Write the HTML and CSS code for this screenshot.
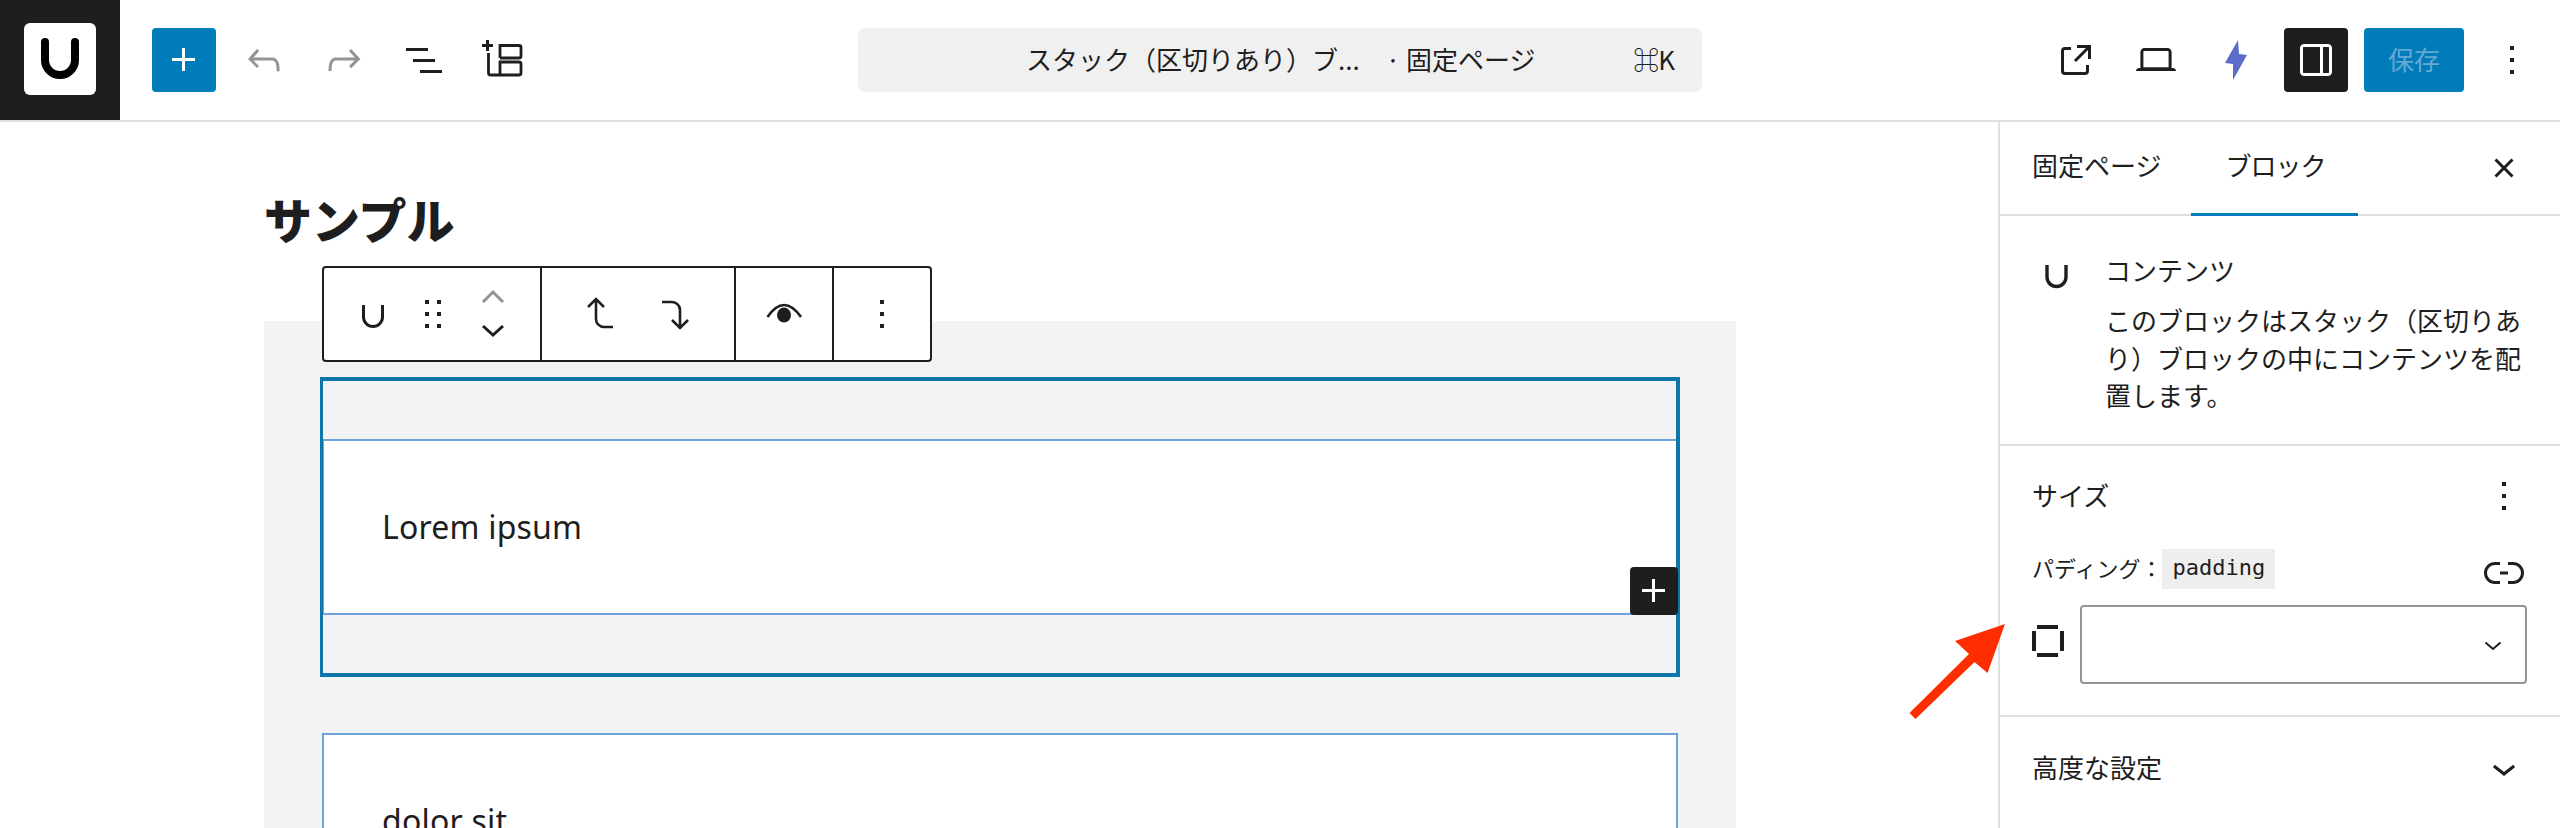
FILE: index.html
```html
<!DOCTYPE html>
<html lang="ja">
<head>
<meta charset="utf-8">
<title>サンプル</title>
<link rel="stylesheet" href="styles.css">
</head>
<body>
<div class="app">
  <header class="topbar">
    <div class="logo-cell">
      <div class="logo-box">
        <svg width="72" height="72" viewBox="0 0 72 72"><path d="M21 19V37a15 15 0 0 0 30 0V19" fill="none" stroke="#000" stroke-width="8" stroke-linecap="round"/></svg>
      </div>
    </div>
    <div class="tools-left">
      <button class="btn btn-primary"><svg class="ico" viewBox="0 0 24 24"><path d="M11 12.5V17.5H12.5V12.5H17.5V11H12.5V6H11V11H6V12.5H11Z" fill="#fff"/></svg></button>
      <button class="btn"><svg class="ico" viewBox="0 0 24 24"><path class="muted" d="M18.3 11.7c-.6-.6-1.4-.9-2.3-.9H6.7l2.9-3.3-1.1-1-4.5 5L8.5 16l1-1-2.7-2.7H16c.5 0 .9.2 1.3.5 1 1 1 3.4 1 4.5v.3h1.5v-.2c0-1.5 0-4.3-1.5-5.7z"/></svg></button>
      <button class="btn"><svg class="ico" viewBox="0 0 24 24"><path class="muted" d="M15.6 6.5l-1.1 1 2.9 3.3H8c-.9 0-1.7.3-2.3.9-1.4 1.5-1.4 4.2-1.4 5.6v.2h1.5v-.3c0-1.1 0-3.5 1-4.5.3-.3.7-.5 1.3-.5h9.2L14.5 15l1.1 1.1 4.6-4.6-4.6-5z"/></svg></button>
      <button class="btn"><svg class="ico" viewBox="0 0 24 24"><path d="M3 6h11v1.5H3V6Zm3.5 5.5h11V13h-11v-1.5ZM21 17H10v1.5h11V17Z" fill="#1e1e1e"/></svg></button>
      <button class="btn"><svg class="ico" viewBox="0 0 48 48"><g fill="none" stroke="#1e1e1e" stroke-width="3"><path d="M7.500 4v11M2 9.500h11"/><path d="M8.500 17V37a2 2 0 0 0 2 2H39a2 2 0 0 0 2-2V28a2 2 0 0 0-2-2H20V39M20 22V9.500H39a2 2 0 0 1 2 2V20a2 2 0 0 1-2 2H20" stroke-width="2.800"/></g></svg></button>
    </div>
    <div class="command">
      <span class="command-title">スタック（区切りあり）ブ...</span>
      <span class="command-type">· 固定ページ</span>
      <span class="command-key">⌘K</span>
    </div>
    <div class="tools-right">
      <button class="btn"><svg class="ico" viewBox="0 0 24 24"><path d="M19.5 4.500h-7V6h4.440l-5.970 5.970 1.060 1.060L18 7.060v4.440h1.500v-7Zm-13 1a2 2 0 0 0-2 2v10a2 2 0 0 0 2 2h10a2 2 0 0 0 2-2v-3H17v3a.5.5 0 0 1-.5.5h-10a.5.5 0 0 1-.5-.5v-10a.5.5 0 0 1 .5-.5h3V5.500h-3Z" fill="#1e1e1e"/></svg></button>
      <button class="btn"><svg class="ico" viewBox="0 0 24 24"><path d="M20.500 16h-.7V8c0-1.100-.9-2-2-2H6.200c-1.100 0-2 .9-2 2v8h-.7c-.8 0-1.500.7-1.500 1.500h20c0-.8-.7-1.500-1.500-1.500zM5.700 8c0-.3.2-.5.5-.5h11.600c.3 0 .5.2.5.5v7.600H5.700V8z" fill="#1e1e1e"/></svg></button>
      <button class="btn"><svg class="ico" viewBox="0 0 48 48"><path d="M26 4 13 27l8 1v16L35 19l-8-1z" fill="#5b6cc9"/></svg></button>
      <button class="btn btn-dark"><svg class="ico" viewBox="0 0 24 24"><path d="M18 4H6c-1.100 0-2 .9-2 2v12c0 1.100.9 2 2 2h12c1.100 0 2-.9 2-2V6c0-1.100-.9-2-2-2zm-4 14.500H6c-.3 0-.5-.2-.5-.5V6c0-.3.2-.5.5-.5h8v13zm4.500-.5c0 .3-.2.5-.5.5h-2.500v-13H18c.3 0 .5.2.5.5v12z" fill="#fff"/></svg></button>
      <button class="btn-save">保存</button>
      <button class="btn"><svg class="ico" viewBox="0 0 24 24"><path d="M13 19h-2v-2h2v2zm0-6h-2v-2h2v2zm0-6h-2V5h2v2z" fill="#1e1e1e"/></svg></button>
    </div>
  </header>

  <div class="workspace">
    <main class="canvas">
      <h1 class="page-title">サンプル</h1>
      <div class="block-toolbar">
        <div class="tb-group tb-first">
          <span class="tb-btn"><svg class="ico" viewBox="0 0 48 48"><path d="M14.500 15V27a9.500 9.500 0 0 0 19 0V15" fill="none" stroke="#1e1e1e" stroke-width="3"/></svg></span>
          <span class="tb-btn"><svg class="ico" viewBox="0 0 24 24"><path d="M8 7h2V5H8v2zm0 6h2v-2H8v2zm0 6h2v-2H8v2zm6-14v2h2V5h-2zm0 8h2v-2h-2v2zm0 6h2v-2h-2v2z" fill="#1e1e1e"/></svg></span>
          <span class="tb-btn"><svg class="ico-tall" viewBox="0 0 48 64"><path d="M14 20 24 10 34 20" fill="none" stroke="#949494" stroke-width="3"/><path d="M14 44 24 53 34 44" fill="none" stroke="#1e1e1e" stroke-width="3"/></svg></span>
        </div>
        <div class="tb-group tb-second">
          <span class="tb-arrow"><svg class="ico" viewBox="0 0 48 48"><path d="M20 9V29a8 8 0 0 0 8 8h9M12 17l8-8 8 8" fill="none" stroke="#1e1e1e" stroke-width="2.600"/></svg></span>
          <span class="tb-arrow"><svg class="ico" viewBox="0 0 48 48"><path d="M10 12h10a8 8 0 0 1 8 8V38M20 30l8 8 8-8" fill="none" stroke="#1e1e1e" stroke-width="2.600"/></svg></span>
        </div>
        <div class="tb-group tb-single">
          <svg class="ico" viewBox="0 0 48 48"><path d="M7.500 27Q24 3 41 27" fill="none" stroke="#1e1e1e" stroke-width="2.600"/><ellipse cx="24" cy="25" rx="7" ry="7.500" fill="#1e1e1e"/></svg>
        </div>
        <div class="tb-group tb-single tb-last">
          <svg class="ico" viewBox="0 0 24 24"><path d="M13 19h-2v-2h2v2zm0-6h-2v-2h2v2zm0-6h-2V5h2v2z" fill="#1e1e1e"/></svg>
        </div>
      </div>
      <section class="stack">
        <div class="stack-item is-selected">
          <div class="content-block">
            <p class="content-text">Lorem ipsum</p>
            <span class="inserter"><svg class="ico" viewBox="0 0 24 24"><path d="M11 12.500V17.500H12.500V12.500H17.500V11H12.500V6H11V11H6V12.500H11Z" fill="#fff"/></svg></span>
          </div>
        </div>
        <div class="stack-item">
          <div class="content-block">
            <p class="content-text">dolor sit</p>
          </div>
        </div>
      </section>
    </main>

    <aside class="sidebar">
      <div class="tabs">
        <span class="tab">固定ページ</span>
        <span class="tab tab-active">ブロック</span>
        <button class="btn-plain tabs-close"><svg class="ico" viewBox="0 0 24 24"><path d="M12 13.060l3.712 3.713 1.061-1.060L13.061 12l3.712-3.712-1.060-1.060L12 10.938 8.288 7.227l-1.061 1.060L10.939 12l-3.712 3.712 1.060 1.061L12 13.061z" fill="#1e1e1e"/></svg></button>
      </div>

      <div class="panel panel-card">
        <svg class="ico" viewBox="0 0 48 48"><path d="M15 15V27a9.500 9.500 0 0 0 19 0V15" fill="none" stroke="#1e1e1e" stroke-width="3.400"/></svg>
        <div class="card-body">
          <h2 class="card-title">コンテンツ</h2>
          <p class="card-desc">このブロックはスタック（区切りあり）ブロックの中にコンテンツを配置します。</p>
        </div>
      </div>

      <div class="panel panel-size">
        <div class="panel-head">
          <span class="panel-name">サイズ</span>
          <svg class="ico" viewBox="0 0 24 24"><path d="M13 19h-2v-2h2v2zm0-6h-2v-2h2v2zm0-6h-2V5h2v2z" fill="#1e1e1e"/></svg>
        </div>
        <div class="field-label-row">
          <span class="field-label"><span class="field-label-text">パディング：</span><code class="code-tag">padding</code></span>
          <svg class="ico" viewBox="0 0 48 48"><path d="M20 14.500h-5a9.500 9.500 0 0 0 0 19h5M28 14.500h5a9.500 9.500 0 0 1 0 19h-5M20 24h8" fill="none" stroke="#1e1e1e" stroke-width="3"/></svg>
        </div>
        <div class="field-row">
          <svg class="sides-ico" viewBox="0 0 32 32"><path d="M5 0h21v4H5zM5 28h21v4H5zM0 6h4v20H0zM28 6h4v20h-4z" fill="#1e1e1e"/></svg>
          <div class="select">
            <svg class="select-chevron" viewBox="0 0 18 10"><path d="M1.500 1.500 9 8l7.500-6.500" fill="none" stroke="#1e1e1e" stroke-width="2"/></svg>
          </div>
        </div>
      </div>

      <div class="panel panel-advanced">
        <span class="panel-name">高度な設定</span>
        <svg class="ico" viewBox="0 0 24 24"><path d="M17.500 11.600L12 16l-5.500-4.400.9-1.200L12 14l4.600-3.600 1 1.200z" fill="#1e1e1e"/></svg>
      </div>
    </aside>
  </div>

  <svg class="annotation" width="120" height="110" viewBox="0 0 120 110"><polygon points="105,9 87.500,58 74.500,47 15.500,104 9.500,98 69,39 55,26" fill="#ff2e00"/></svg>
</div>
</body>
</html>
```
FILE: styles.css
```css
* { box-sizing: border-box; }
html, body { margin: 0; padding: 0; background: #fff; }
body {
  font-family: "Noto Sans CJK JP", "Noto Sans", sans-serif;
  color: #1e1e1e;
  font-size: 26px;
}
button { font: inherit; color: inherit; border: 0; padding: 0; background: none; }
h1, h2, p { margin: 0; font-weight: 400; }

.app { position: relative; width: 2560px; height: 828px; overflow: hidden; }
.ico { display: block; width: 48px; height: 48px; flex: none; }
.muted { fill: #949494; }

/* top bar */
.topbar {
  display: grid;
  grid-template-columns: 1fr auto 1fr;
  align-items: center;
  height: 122px;
  border-bottom: 2px solid #e0e0e0;
  position: relative;
}
.logo-cell {
  position: absolute;
  left: 0; top: 0;
  width: 120px; height: 120px;
  background: #1e1e1e;
  padding: 23px 24px;
}
.logo-box { width: 72px; height: 72px; background: #fff; border-radius: 6px; }
.logo-box svg { display: block; }
.tools-left { display: flex; gap: 16px; padding-left: 152px; }
.tools-right { display: flex; gap: 16px; justify-content: flex-end; padding-right: 16px; }
.btn {
  width: 64px; height: 64px;
  border-radius: 4px;
  display: flex; align-items: center; justify-content: center;
}
.btn-primary { background: #007cba; }
.btn-dark { background: #1e1e1e; }
.btn-save {
  width: 100px; height: 64px;
  border-radius: 4px;
  background: #007cba;
  color: #66a9d6;
  font-size: 26px;
  padding-bottom: 4px;
}
.command {
  width: 844px; height: 64px;
  background: #f0f0f0;
  border-radius: 8px;
  display: flex; align-items: center;
  padding: 0 28px 4px 168px;
  font-size: 26px;
}
.command-title { white-space: nowrap; }
.command-type { margin-left: 26px; white-space: nowrap; }
.command-key { margin-left: auto; letter-spacing: -1px; }

/* workspace */
.workspace { display: flex; height: 706px; }
.canvas { position: relative; width: 1998px; flex: none; padding: 63px 0 0 264px; }
.page-title { font-size: 48px; line-height: 66px; font-weight: 900; margin-bottom: 70px; }
.stack { width: 1472px; background: #f1f3f5; padding: 56px; height: 600px; }
.stack-item { position: relative; padding: 62px 2px; margin-top: -62px; }
.stack-item + .stack-item { margin-top: -6px; }
.stack-item.is-selected { margin-top: 0; }
.stack-item.is-selected::after {
  content: "";
  position: absolute; inset: 0;
  border: solid #0e76a8;
  border-width: 4px 4px 4px 3px;
  pointer-events: none;
}
.content-block {
  position: relative;
  background: #fff;
  border: 2px solid #6fa3dc;
  padding: 56px 58px;
}
.content-text { font-family: "Noto Sans", sans-serif; font-size: 32px; line-height: 60px; letter-spacing: .2px; }
.inserter {
  position: absolute; right: -2px; bottom: -2px;
  width: 48px; height: 48px;
  background: #1e1e1e; border-radius: 4px;
  z-index: 2;
}

/* block toolbar */
.block-toolbar {
  position: absolute; left: 322px; top: 144px; z-index: 3;
  display: flex;
  width: 610px; height: 96px;
  background: #fff;
  border: 2px solid #1e1e1e;
  border-radius: 4px;
}
.tb-group { display: flex; align-items: center; border-right: 2px solid #1e1e1e; }
.tb-first { width: 218px; padding-left: 19px; }
.tb-second { width: 194px; padding-left: 20px; }
.tb-single { width: 98px; justify-content: center; }
.tb-last { border-right: 0; width: 96px; }
.tb-btn { width: 60px; display: flex; justify-content: center; }
.tb-arrow { width: 76px; display: flex; justify-content: center; }
.ico-tall { display: block; width: 48px; height: 64px; }

/* sidebar */
.sidebar { width: 562px; flex: none; border-left: 2px solid #e0e0e0; }
.tabs {
  height: 94px;
  display: flex;
  border-bottom: 2px solid #e0e0e0;
  align-items: stretch;
  position: relative;
}
.tab {
  padding: 0 32px;
  line-height: 86px;
  white-space: nowrap;
}
.tab-active {
  margin-left: -2px;
  padding: 0 32px 0 34px;
  letter-spacing: -1px;
  box-shadow: inset 0 -3px 0 #007cba;
  height: 94px;
}
.tabs-close { margin-left: auto; margin-right: 32px; }
.panel { border-bottom: 2px solid #e0e0e0; padding-left: 32px; }
.panel-card { display: flex; height: 230px; padding-top: 34px; }
.card-body { margin-left: 25px; padding-top: 2px; }
.card-title { font-size: 26px; line-height: 36px; }
.card-desc { width: 421px; font-size: 26px; line-height: 37.500px; margin-top: 13px; }
.panel-size { height: 271px; padding: 26px 32px 0; }
.panel-head { display: flex; justify-content: space-between; align-items: center; height: 48px; margin-bottom: 29px; }
.panel-name { font-size: 26px; padding-bottom: 4px; }
.field-label-row { display: flex; justify-content: space-between; align-items: flex-start; height: 48px; margin-bottom: 8px; }
.field-label { font-size: 22px; line-height: 40px; display: flex; align-items: center; }
.field-label-text { line-height: 36px; margin-bottom: 4px; }
.code-tag {
  font-family: "DejaVu Sans Mono", "Liberation Mono", monospace;
  font-size: 22px; line-height: 38px;
  padding-bottom: 2px;
  background: #eee;
  padding-left: 10px; padding-right: 10px;
}
.field-row { display: flex; align-items: flex-start; gap: 16px; }
.sides-ico { display: block; width: 32px; height: 32px; margin-top: 20px; flex: none; }
.select {
  width: 447px; height: 79px;
  border: 2px solid #949494;
  border-radius: 4px;
  display: flex; align-items: center; justify-content: flex-end;
  padding-right: 23px;
}
.select-chevron { display: block; width: 18px; height: 10px; margin-top: 2px; }
.panel-advanced {
  display: flex; justify-content: space-between; align-items: center;
  border-bottom: 0;
  padding: 27px 32px 0;
}

/* annotation */
.annotation { position: absolute; left: 1900px; top: 615px; z-index: 5; }
```
